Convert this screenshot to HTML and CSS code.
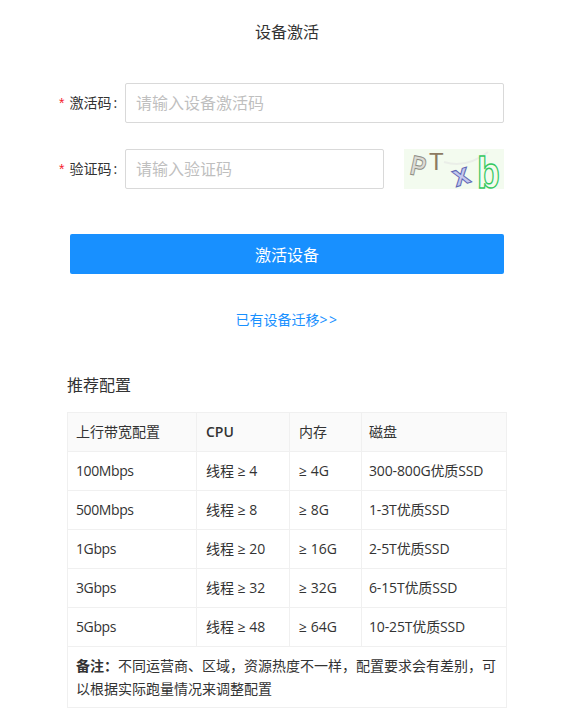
FILE: index.html
```html
<!DOCTYPE html>
<html lang="zh-CN">
<head>
    <meta charset="UTF-8">
    <meta name="viewport" content="width=device-width, initial-scale=1.0">
    <title>设备激活</title>
    <link rel="stylesheet" href="styles.css">
</head>
<body>
    <h1 class="title">设备激活</h1>

    <form class="form">
        <div class="form-row">
            <label class="form-label"><span class="required">*</span>激活码<span class="colon">:</span></label>
            <input class="form-input" type="text" placeholder="请输入设备激活码">
        </div>
        <div class="form-row form-row-code">
            <label class="form-label"><span class="required">*</span>验证码<span class="colon">:</span></label>
            <input class="form-input" type="text" placeholder="请输入验证码">
            <svg class="captcha" width="100" height="50" viewBox="0 0 100 50">
                <rect width="100" height="40" fill="#f3fbef"/>
                <path d="M40 13 Q62 20 84 3" fill="none" stroke="#eaeee8" stroke-width="2"/>
                <text class="captcha-char" x="0" y="0" font-size="28" font-weight="700" fill="#dcdcd6" stroke="#8e8e84" stroke-width="1" transform="translate(5 25) rotate(12) scale(.8 1)">P</text>
                <text class="captcha-char" x="25" y="21" font-size="24" fill="#8d7a62">T</text>
                <text class="captcha-char" x="0" y="0" font-size="30" font-weight="700" fill="#c4c8ee" stroke="#5f66b4" stroke-width="1" transform="translate(52 38) rotate(-18)">x</text>
                <text class="captcha-char" x="0" y="0" font-size="44" font-weight="700" fill="#f3fbef" stroke="#35c860" stroke-width="1.4" transform="translate(73 39) scale(.85 1)">b</text>
            </svg>
        </div>
        <button class="submit-btn" type="button">激活设备</button>
    </form>

    <a class="migrate-link" href="#">已有设备迁移<span class="arrows">&gt;&gt;</span></a>

    <h2 class="section-title">推荐配置</h2>

    <table class="config-table">
        <thead>
            <tr>
                <th class="col-band">上行带宽配置</th>
                <th class="col-cpu cpu-head">CPU</th>
                <th class="col-mem">内存</th>
                <th class="col-disk">磁盘</th>
            </tr>
        </thead>
        <tbody>
            <tr><td class="band">100Mbps</td><td>线程 ≥ 4</td><td>≥ 4G</td><td class="disk">300-800G优质SSD</td></tr>
            <tr><td class="band">500Mbps</td><td>线程 ≥ 8</td><td>≥ 8G</td><td class="disk">1-3T优质SSD</td></tr>
            <tr><td class="band">1Gbps</td><td>线程 ≥ 20</td><td>≥ 16G</td><td class="disk">2-5T优质SSD</td></tr>
            <tr><td class="band">3Gbps</td><td>线程 ≥ 32</td><td>≥ 32G</td><td class="disk">6-15T优质SSD</td></tr>
            <tr><td class="band">5Gbps</td><td>线程 ≥ 48</td><td>≥ 64G</td><td class="disk">10-25T优质SSD</td></tr>
            <tr>
                <td class="note" colspan="4"><b>备注：</b>不同运营商、区域，资源热度不一样，配置要求会有差别，可以根据实际跑量情况来调整配置</td>
            </tr>
        </tbody>
    </table>
</body>
</html>
```

FILE: styles.css
```css
body {
    font-family: "Open Sans", "Noto Sans CJK SC", sans-serif;
    font-size: 14px;
    color: #333;
    background: #fff;
    margin: 0;
    padding: 0 81px 0 67px;
}

.title {
    font-size: 16px;
    font-weight: 400;
    line-height: 24px;
    text-align: center;
    color: #333;
    margin: 0;
    padding-top: 20px;
}

/* 表单 */
.form {
    margin-top: 39px;
}

.form-row {
    display: flex;
    align-items: center;
    height: 40px;
    margin-right: 3px;
    margin-bottom: 26px;
}

.form-row-code {
    margin-bottom: 45px;
}

.form-label {
    flex: none;
    width: 66px;
    margin-left: -8px;
    line-height: 40px;
    white-space: nowrap;
    color: #333;
}

.required {
    color: #f5222d;
    margin-right: 5px;
    font-family: "Liberation Sans", sans-serif;
}

.colon {
    margin-left: 2px;
}

.form-input {
    flex: 1;
    min-width: 0;
    height: 40px;
    box-sizing: border-box;
    padding: 0 10px;
    border: 1px solid #d9d9d9;
    border-radius: 2px;
    font-family: inherit;
    font-size: 16px;
    outline: none;
}

.form-input::placeholder {
    color: #bfbfbf;
}

.captcha {
    flex: none;
    align-self: flex-start;
    margin-left: 20px;
}

.captcha-char {
    font-family: "Liberation Sans", sans-serif;
}

.submit-btn {
    display: block;
    width: 434px;
    height: 40px;
    margin-left: 3px;
    border: 0;
    border-radius: 2px;
    background: #1890ff;
    color: #fff;
    font-family: inherit;
    font-size: 16px;
}

.migrate-link {
    display: block;
    margin-top: 36px;
    line-height: 20px;
    text-align: center;
    color: #1890ff;
    text-decoration: none;
}

.arrows {
    letter-spacing: 1.5px;
}

/* 推荐配置 */
.section-title {
    font-size: 16px;
    font-weight: 400;
    line-height: 24px;
    color: #333;
    margin: 43px 0 15px;
}

.config-table {
    width: 440px;
    table-layout: fixed;
    border-collapse: collapse;
    border: 1px solid #f0f0f0;
}

.config-table th,
.config-table td {
    height: 39px;
    box-sizing: border-box;
    padding: 0 9px;
    border: 1px solid #f0f0f0;
    text-align: left;
    font-weight: 400;
    line-height: 22px;
}

.config-table th {
    background: #fafafa;
}

.config-table .cpu-head {
    font-weight: 600;
}

.col-band {
    width: 129px;
}

.col-cpu {
    width: 93px;
}

.col-mem {
    width: 72px;
}

.config-table .col-band,
.config-table .band {
    padding-left: 8px;
}

.config-table .band {
    letter-spacing: -0.4px;
}

.config-table .col-disk,
.config-table .disk {
    padding-left: 7px;
}

.config-table .disk {
    letter-spacing: -0.15px;
}

.config-table .note {
    height: 61px;
    padding-left: 8px;
    line-height: 23px;
}
```
